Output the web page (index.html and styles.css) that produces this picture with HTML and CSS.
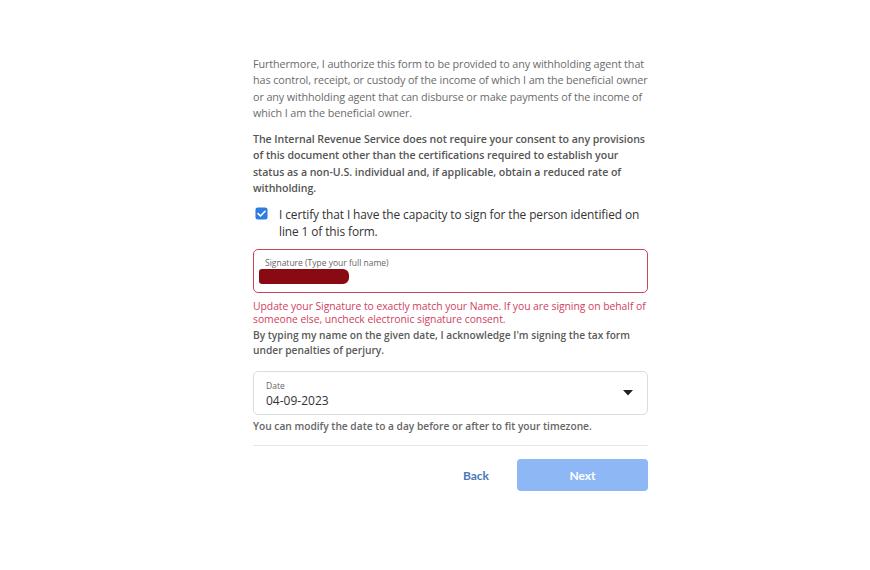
FILE: index.html
```html
<!DOCTYPE html>
<html>
<head>
<meta charset="utf-8">
<link rel="stylesheet" href="styles.css">
</head>
<body>
<main class="form">
  <p class="para">Furthermore, I authorize this form to be provided to any withholding agent that has control, receipt, or custody of the income of which I am the beneficial owner or any withholding agent that can disburse or make payments of the income of which I am the beneficial owner.</p>
  <p class="para bold">The Internal Revenue Service does not require your consent to any provisions of this document other than the certifications required to establish your status as a non-U.S. individual and, if applicable, obtain a reduced rate of withholding.</p>
  <label class="check">
    <span class="box"><svg viewBox="0 0 14 14" width="13" height="13"><rect x="0.5" y="0.5" width="13" height="13" rx="2.5" fill="#2f7de1"/><path d="M3.3 7.2 L5.9 9.7 L10.8 4.6" fill="none" stroke="#fff" stroke-width="1.8" stroke-linecap="round" stroke-linejoin="round"/></svg></span>
    <span class="check-text">I certify that I have the capacity to sign for the person identified on line 1 of this form.</span>
  </label>
  <div class="field error">
    <span class="field-label">Signature (Type your full name)</span>
    <span class="redact"></span>
  </div>
  <p class="err-msg">Update your Signature to exactly match your Name. If you are signing on behalf of someone else, uncheck electronic signature consent.</p>
  <p class="note">By typing my name on the given date, I acknowledge I'm signing the tax form under penalties of perjury.</p>
  <div class="field date">
    <div class="date-col">
      <span class="field-label">Date</span>
      <span class="field-value">04-09-2023</span>
    </div>
    <svg class="caret" viewBox="0 0 10 6" width="10" height="6"><path d="M0 0 L10 0 L5 5.5 Z" fill="#222"/></svg>
  </div>
  <p class="hint">You can modify the date to a day before or after to fit your timezone.</p>
  <div class="divider"></div>
  <div class="actions">
    <button class="btn-back">Back</button>
    <button class="btn-next">Next</button>
  </div>
</main>
</body>
</html>
```
FILE: styles.css
```css
html, body {
  margin: 0;
  padding: 0;
  background: #fff;
}
body {
  font-family: "Open Sans", "Noto Sans", sans-serif;
}
.form {
  width: 395px;
  margin-left: 253px;
  padding-top: 56px;
  display: flex;
  flex-direction: column;
}
.para {
  margin: 0 0 10px 0;
  font-size: 10.8px;
  line-height: 16.3px;
  color: #6b6b6b;
  letter-spacing: -0.1px;
}
.para.bold {
  font-size: 10.6px;
  font-weight: 600;
  color: #555;
  margin-bottom: 10px;
  letter-spacing: -0.05px;
}
.check {
  display: flex;
  align-items: flex-start;
  gap: 11px;
  padding-left: 2px;
}
.box {
  flex: none;
  margin-top: 1px;
  line-height: 0;
}
.check-text {
  font-size: 11.9px;
  line-height: 17px;
  color: #333;
  letter-spacing: -0.1px;
}
.field {
  box-sizing: border-box;
  border: 1px solid #ddd;
  border-radius: 5px;
  height: 44px;
  padding: 6px 12px 0 12px;
}
.field.error {
  margin-top: 9px;
  border-color: #c9465e;
  display: flex;
  flex-direction: column;
  padding-left: 11px;
  padding-top: 7px;
}
.field-label {
  font-size: 8.5px;
  color: #666;
  line-height: 12px;
}
.redact {
  display: block;
  width: 90px;
  height: 15px;
  margin-left: -6px;
  margin-top: 0;
  background: #8a0a14;
  border-radius: 3px 6px 6px 3px;
}
.err-msg {
  margin: 7px 0 0 0;
  font-size: 10.4px;
  line-height: 12.5px;
  color: #d0425e;
  letter-spacing: -0.05px;
}
.note {
  margin: 3px 0 0 0;
  font-size: 10.2px;
  line-height: 15px;
  font-weight: 600;
  color: #5a5a5a;
}
.field.date {
  margin-top: 13px;
  display: flex;
  align-items: center;
  justify-content: space-between;
  padding-top: 2px;
  padding-right: 14px;
  border-color: #dcdcdc;
}
.date-col {
  display: flex;
  flex-direction: column;
}
.field-value {
  font-size: 12px;
  line-height: 17px;
  color: #333;
}
.caret {
  margin-top: -3px;
}
.hint {
  margin: 4px 0 0 0;
  font-size: 10.2px;
  line-height: 14px;
  font-weight: 600;
  color: #666;
}
.divider {
  height: 1px;
  background: #e6e6e6;
  margin-top: 12px;
}
.actions {
  display: flex;
  justify-content: flex-end;
  align-items: center;
  margin-top: 13px;
  gap: 28px;
}
.btn-back, .btn-next {
  font-family: "Lato", "Open Sans", sans-serif;
  font-weight: 700;
  font-size: 12px;
  border: none;
  cursor: pointer;
}
.btn-back {
  background: none;
  color: #4b78b6;
  padding: 0;
}
.btn-next {
  width: 131px;
  height: 32px;
  border-radius: 4px;
  background: #8db8f5;
  color: #fff;
}
```
